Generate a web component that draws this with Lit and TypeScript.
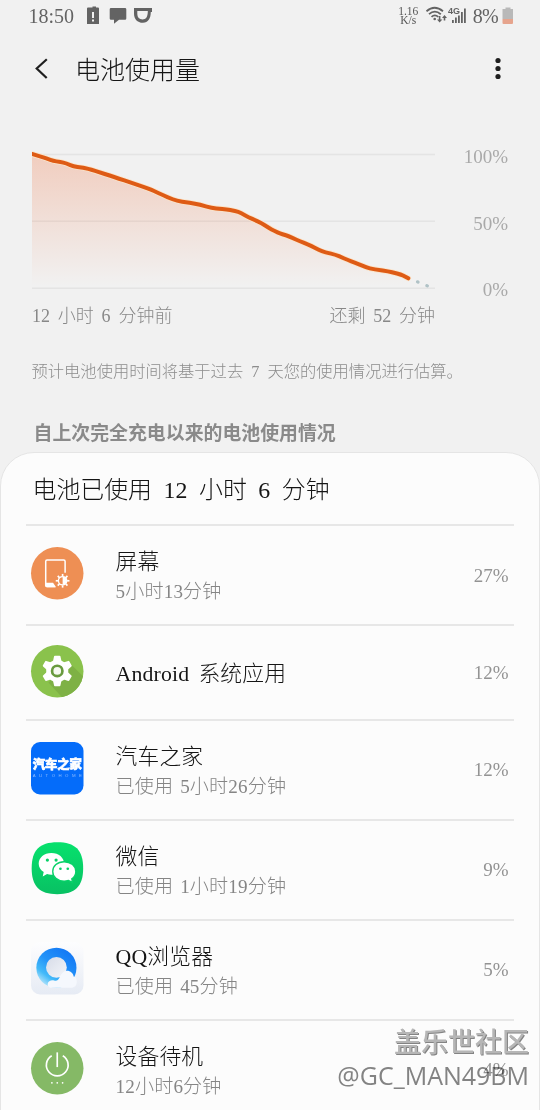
import { LitElement, html, css, svg, TemplateResult } from "lit";
import { customElement, property } from "lit/decorators.js";

interface Usage {
  name: string;
  detail?: string;
  percent: string;
  icon: string;
}

const usages: Usage[] = [
  { name: "屏幕", detail: "5小时13分钟", percent: "27%", icon: "screen" },
  { name: "Android 系统应用", percent: "12%", icon: "android" },
  { name: "汽车之家", detail: "已使用 5小时26分钟", percent: "12%", icon: "autohome" },
  { name: "微信", detail: "已使用 1小时19分钟", percent: "9%", icon: "wechat" },
  { name: "QQ浏览器", detail: "已使用 45分钟", percent: "5%", icon: "qq" },
  { name: "设备待机", detail: "12小时6分钟", percent: "4%", icon: "standby" },
];

const levels: [number, number][] = [
  [32, 154], [43.3, 157.3], [53.3, 161], [63.3, 162.3], [73.3, 166.3], [87.3, 168.5],
  [113.3, 176.7], [150, 189.2], [163.3, 195.4], [176.7, 200.9], [195, 203.4], [211.7, 208],
  [226.7, 209.3], [238.3, 211.7], [248.3, 217], [261.7, 223.3], [271.7, 229.6], [280, 233.5],
  [288.3, 236], [300, 241.3], [311.7, 246], [321.7, 251.5], [335, 254.5], [348.3, 260.2],
  [358.3, 264], [369.3, 268.5], [388.3, 271.4], [400.7, 274.3], [408.3, 278.3],
];

// Rounds each corner of the polyline slightly while keeping its steps visible.
function smooth(points: [number, number][]): string {
  let d = `M${points[0][0]} ${points[0][1]}`;
  const mix = (a: [number, number], b: [number, number], t: number) =>
    `${(a[0] + (b[0] - a[0]) * t).toFixed(2)} ${(a[1] + (b[1] - a[1]) * t).toFixed(2)}`;
  for (let i = 1; i < points.length - 1; i++) {
    d += ` L${mix(points[i], points[i - 1], 0.3)} Q${points[i][0]} ${points[i][1]} ${mix(points[i], points[i + 1], 0.3)}`;
  }
  const last = points[points.length - 1];
  return `${d} L${last[0]} ${last[1]}`;
}

const gearTeeth = [0, 60, 120, 180, 240, 300];
const sunRays = [0, 45, 90, 135, 180, 225, 270, 315];

const icons: Record<string, TemplateResult> = {
  screen: svg`
    <circle cx="78.500" cy="78.500" r="78.500" fill="#ee8f54"/>
    <path d="M72 118H47a3 3 0 0 1-3-3V43a4 4 0 0 1 4-4h50a4 4 0 0 1 4 4v34" fill="none" stroke="#fff" stroke-width="4.500"/>
    <path d="M44 107h22l9 13H47q-4-1-4-5z" fill="#fff"/>
    <circle cx="94.500" cy="101" r="12.500" fill="none" stroke="#fff" stroke-width="4"/>
    <path d="M94.500 89a12 12 0 0 1 0 24z" fill="#fff"/>
    ${sunRays.map((a) => svg`<path d="M94.500 80.500v7" stroke="#fff" stroke-width="5" transform="rotate(${a} 94.500 101)"/>`)}`,
  android: svg`
    <defs><clipPath id="disc"><circle cx="78.500" cy="78.500" r="78.500"/></clipPath></defs>
    <circle cx="78.500" cy="78.500" r="78.500" fill="#8ac24c"/>
    <path d="M117 55l60 60v60H110L52 112z" fill="#7eb145" clip-path="url(#disc)"/>
    <circle cx="78.500" cy="77.500" r="33" fill="#fff"/>
    ${gearTeeth.map((a) => svg`<path d="M65 52l4-18a2.500 2.500 0 0 1 2.500-2h14a2.500 2.500 0 0 1 2.500 2l4 18z" fill="#fff" transform="rotate(${a} 78.500 77.500)"/>`)}
    <circle cx="78.500" cy="77.500" r="15.500" fill="#f6faf1" stroke="#699b3f" stroke-width="8"/>`,
  autohome: svg`
    <rect width="157" height="157" rx="27" fill="#046cfa"/>
    <text x="5" y="82" class="brand" textLength="147" lengthAdjust="spacingAndGlyphs">汽车之家</text>
    <text x="5" y="104" class="brand-sub" textLength="147">AUTOHOME</text>`,
  wechat: svg`
    <defs><linearGradient id="wx" x1="0" y1="0" x2="0" y2="1"><stop offset="0" stop-color="#07e16d"/><stop offset="1" stop-color="#08c163"/></linearGradient></defs>
    <path d="M78.500 1C132 1 156 24 156 78.500S132 156 78.500 156 2 132 2 78.500 25 1 78.500 1z" fill="url(#wx)"/>
    <path d="M61 33c22 0 38 14 38 32 0 19-17 33-38 33-5 0-9-.5-13-2l-13 7 3-13C29 84 23 75 23 65c0-18 16-32 38-32z" fill="#fff"/>
    <path d="M99 59c20 0 35 13 35 29 0 10-5 17-12 22l2 11-12-6c-4 1-8 2-13 2-20 0-34-13-34-29s14-29 34-29z" fill="#fff" stroke="#08d168" stroke-width="4"/>
    <g fill="#08d168"><circle cx="49" cy="54" r="4.800"/><circle cx="75" cy="54" r="4.800"/><circle cx="88" cy="80" r="4"/><circle cx="110" cy="80" r="4"/></g>`,
  qq: svg`
    <defs>
      <linearGradient id="qbg" x1="0" y1="0" x2="0" y2="1"><stop offset="0" stop-color="#fdfdfe"/><stop offset="1" stop-color="#e6ebf4"/></linearGradient>
      <linearGradient id="qring" x1=".8" y1=".1" x2=".15" y2=".95"><stop offset="0" stop-color="#1479f5"/><stop offset=".45" stop-color="#2393f8"/><stop offset=".75" stop-color="#43baf9"/><stop offset="1" stop-color="#c9ecfb"/></linearGradient>
      <linearGradient id="qhole" x1="0" y1="0" x2="1" y2="1"><stop offset="0" stop-color="#d7dce8"/><stop offset="1" stop-color="#f3f5f9"/></linearGradient>
    </defs>
    <rect width="157" height="157" rx="27" fill="url(#qbg)"/>
    <circle cx="76" cy="77" r="60" fill="url(#qring)"/>
    <circle cx="76" cy="76" r="31" fill="url(#qhole)"/>
    <path d="M59 137c-6-1-10-6-9-12 1-8 10-12 19-10 8 2 12 0 16-8 5-12 13-21 23-21s18 7 20 18c6 0 9 7 9 15 0 11-7 18-17 18z" fill="#f5f8fd"/>`,
  standby: svg`
    <circle cx="78.500" cy="78.500" r="78.500" fill="#85b966"/>
    <path d="M62 41a32.500 32.500 0 1 0 33 0" fill="none" stroke="#fff" stroke-width="5"/>
    <path d="M78.500 31v44" stroke="#fff" stroke-width="5"/>
    <g fill="#fff"><circle cx="62.500" cy="122" r="2.600"/><circle cx="78.500" cy="122" r="2.600"/><circle cx="94.500" cy="122" r="2.600"/></g>`,
};

@customElement("status-bar")
class StatusBar extends LitElement {
  static styles = css`
    :host { display: flex; height: 32px; align-items: center; padding: 0 26.500px 0 28.500px; color: #636363; box-sizing: border-box; }
    .time { font-size: 20px; line-height: 32px; width: 57.500px; }
    .left { flex: 1; }
    .speed { display: flex; flex-direction: column; font-size: 11.500px; line-height: 9.500px; text-align: center; width: 20px; margin-right: 8px; color: #555; }
    .level { font-size: 20px; line-height: 34px; letter-spacing: -0.700px; margin-left: 4.500px; margin-right: 3.500px; }
    .g { font: 700 9.500px "Liberation Sans", sans-serif; fill: #636363; }
    svg { display: block; flex: none; }
  `;
  render() {
    return html`
      <span class="time">18:50</span>
      <svg width="68" height="32" viewBox="86 0 68 32" fill="#636363">
        <path d="M90.500 7.500h2V6.500h3.500v1h2a1 1 0 0 1 1 1V24H87V8.500a1 1 0 0 1 1-1z"/>
        <path d="M92 12h2v6h-2zM92 19.500h2v2h-2z" fill="#f1f1f1"/>
        <path d="M111 8h14a1.300 1.300 0 0 1 1.300 1.300V18.500a1.300 1.300 0 0 1-1.300 1.300h-6l-5 4v-4h-3a1.300 1.300 0 0 1-1.300-1.300V9.300A1.300 1.300 0 0 1 111 8z"/>
        <path d="M134 8h18v4h-1.200c0 6.500-2.800 10.800-7.800 10.800-6 0-9-3.800-9-9.300zM137.300 11v3c0 3.500 1.900 5.400 5.300 5.400 3.200 0 5-2.200 5.200-7.400V11z" fill-rule="evenodd"/>
      </svg>
      <span class="left"></span>
      <div class="speed"><span>1.16</span><span>K/s</span></div>
      <svg width="42" height="32" viewBox="426 0 42 32">
        <g fill="none" stroke="#636363" stroke-width="1.800">
          <path d="M426.500 11.300q8-7 16.500 0"/><path d="M429 14.200q5.800-5.200 11.800 0"/><path d="M431.500 16.900q3.300-3 6.800 0"/>
        </g>
        <circle cx="434.700" cy="19" r="1.300" fill="#636363"/>
        <path d="M438.800 16h1.600v3.500h2L439.600 22.500 437 19.500h1.800zM443.700 20.500h1.600V18h1.700L444.500 15 442 18h1.700z" fill="#636363"/>
        <text x="448" y="14" class="g" textLength="12" lengthAdjust="spacingAndGlyphs">4G</text>
        <path d="M452 20h1.800v3H452zM455 17.500h1.800V23H455zM458 15.500h1.800V23H458zM461 12h1.800v11H461zM464 8.500h1.800V23H464z" fill="#636363"/>
      </svg>
      <span class="level">8%</span>
      <svg width="12" height="32" viewBox="501.500 0 12 32">
        <path d="M505 9V7.500h5V9h2.500v10H502V9z" fill="#b9b9b9"/>
        <path d="M502 19h10.500v4a1 1 0 0 1-1 1H503a1 1 0 0 1-1-1z" fill="#e6a48d"/>
      </svg>
    `;
  }
}

@customElement("battery-chart")
class BatteryChart extends LitElement {
  static styles = css`
    :host { display: block; padding: 0 32px; }
    .plot { display: flex; height: 150px; }
    .scale { flex: 1; display: flex; flex-direction: column; text-align: right; font-size: 19px; line-height: 22px; color: #a9a9a9; gap: 44.500px; }
    .axis { display: flex; justify-content: space-between; width: 403px; font-size: 18px; line-height: 24px; color: #888; word-spacing: 3.300px; margin-top: 8px; }
    svg { display: block; }
  `;
  render() {
    const line = smooth(levels);
    return html`
      <div class="plot">
        <svg width="404" height="150" viewBox="32 146 404 150">
          <defs>
            <linearGradient id="fade" gradientUnits="userSpaceOnUse" x1="0" y1="154" x2="0" y2="286">
              <stop offset="0" stop-color="#f05a1e" stop-opacity=".24"/>
              <stop offset="1" stop-color="#f05a1e" stop-opacity="0"/>
            </linearGradient>
          </defs>
          <path d="M32 154.500H435M32 221.200H435M32 288.300H435" stroke="#e4e4e4" stroke-width="1.400"/>
          <path d="${line} V288H32z" fill="url(#fade)"/>
          <path d="${line}" fill="none" stroke="#fbe3c8" stroke-width="5.600" stroke-linecap="round"/>
          <path d="${line}" fill="none" stroke="#de5b15" stroke-width="4" stroke-linecap="round" stroke-linejoin="round"/>
          <path d="M417.500 281.800l.6.300M426.800 285.600l.6.300" stroke="#b0c2c6" stroke-width="3.200" stroke-linecap="round"/>
        </svg>
        <div class="scale"><span>100%</span><span>50%</span><span>0%</span></div>
      </div>
      <div class="axis"><span>12 小时 6 分钟前</span><span>还剩 52 分钟</span></div>
    `;
  }
}

@customElement("usage-row")
class UsageRow extends LitElement {
  @property({ attribute: false }) item!: Usage;
  static styles = css`
    :host { display: flex; align-items: center; height: 98px; padding: 0 5.500px 0 5px; border-top: 2px solid #e7e7e7; }
    :host([single]) { height: 92.500px; }
    .icon { flex: none; width: 52.500px; height: 52.500px; display: block; overflow: visible; margin-bottom: 3px; }
    .brand { font: 900 37px "Noto Sans CJK SC", sans-serif; fill: #fff; stroke: #fff; stroke-width: 2px; }
    .brand-sub { font: 13px "Liberation Sans", sans-serif; fill: #8fbcff; }
    .text { flex: 1; display: flex; flex-direction: column; padding: 3px 0 0 32px; }
    .name { font-size: 21.800px; line-height: 30px; color: #151515; word-spacing: 3.600px; letter-spacing: 0.150px; }
    .detail { font-size: 19.100px; line-height: 29px; color: #858585; word-spacing: 2px; letter-spacing: 0.150px; }
    .percent { font-size: 19px; line-height: 28px; color: #939393; padding-top: 1px; }
  `;
  render() {
    const { name, detail, percent, icon } = this.item;
    return html`
      <svg class="icon" viewBox="0 0 157 157">${icons[icon]}</svg>
      <div class="text">
        <span class="name">${name}</span>
        ${detail ? html`<span class="detail">${detail}</span>` : null}
      </div>
      <span class="percent">${percent}</span>
    `;
  }
}

@customElement("app-root")
class AppRoot extends LitElement {
  static styles = css`
    :host {
      display: block; position: relative; width: 540px; height: 1110px; overflow: hidden;
      background: #f1f1f1; font-family: "Liberation Serif", "Noto Sans CJK SC", serif; font-weight: 300;
    }
    .header { display: flex; align-items: center; height: 74px; padding: 0 38px 0 34px; }
    .title { flex: 1; margin: 0 0 0 25px; padding-top: 4px; font-size: 25px; font-weight: 300; line-height: 36px; color: #151515; }
    .header svg { display: block; }
    .chart { padding-top: 40px; display: block; }
    .note { margin: 32px 0 0; padding: 0 31.500px; font-size: 16.300px; line-height: 24px; color: #8c8c8c; word-spacing: 4px; white-space: nowrap; }
    .section { margin: 37px 0 0; padding: 0 33.500px; font-size: 18.900px; font-weight: 700; line-height: 26px; color: #8a8a8a; }
    .card { margin-top: 5px; height: 700px; background: #fcfcfc; border: 1px solid #e5e5e5; border-radius: 34px 34px 0 0; padding: 0 25px; box-sizing: border-box; }
    .total { font-size: 23.900px; line-height: 75px; height: 71px; padding-left: 6.500px; color: #151515; word-spacing: 5.600px; }
    .mark {
      position: absolute; right: 11px; top: 1024px; text-align: right; color: #858585; mix-blend-mode: multiply;
      font-family: "Noto Sans CJK SC", sans-serif; line-height: 34px; font-size: 27px;
    }
    .community { font-weight: 500; color: #b8b8b8; text-shadow: 1px 1px 0 #858585; }
    .user { font-family: "Open Sans", sans-serif; font-weight: 400; font-size: 25px; }
  `;
  render() {
    return html`
      <status-bar></status-bar>
      <div class="header">
        <svg width="16" height="24" viewBox="34 57 16 24"><path d="M46.800 59.200L36.700 68.500l10 9.500" fill="none" stroke="#1f1f1f" stroke-width="2.200"/></svg>
        <h1 class="title">电池使用量</h1>
        <svg width="8" height="24" viewBox="494 56 8 24" fill="#1f1f1f"><circle cx="498" cy="59.500" r="2.600"/><circle cx="498" cy="67.500" r="2.600"/><circle cx="498" cy="75.500" r="2.600"/></svg>
      </div>
      <div class="chart"><battery-chart></battery-chart></div>
      <p class="note">预计电池使用时间将基于过去 7 天您的使用情况进行估算。</p>
      <h2 class="section">自上次完全充电以来的电池使用情况</h2>
      <div class="card">
        <div class="total">电池已使用 12 小时 6 分钟</div>
        ${usages.map((u) => html`<usage-row .item=${u} ?single=${!u.detail}></usage-row>`)}
      </div>
      <div class="mark"><div class="community">盖乐世社区</div><div class="user">@GC_MAN49BM</div></div>
    `;
  }
}
